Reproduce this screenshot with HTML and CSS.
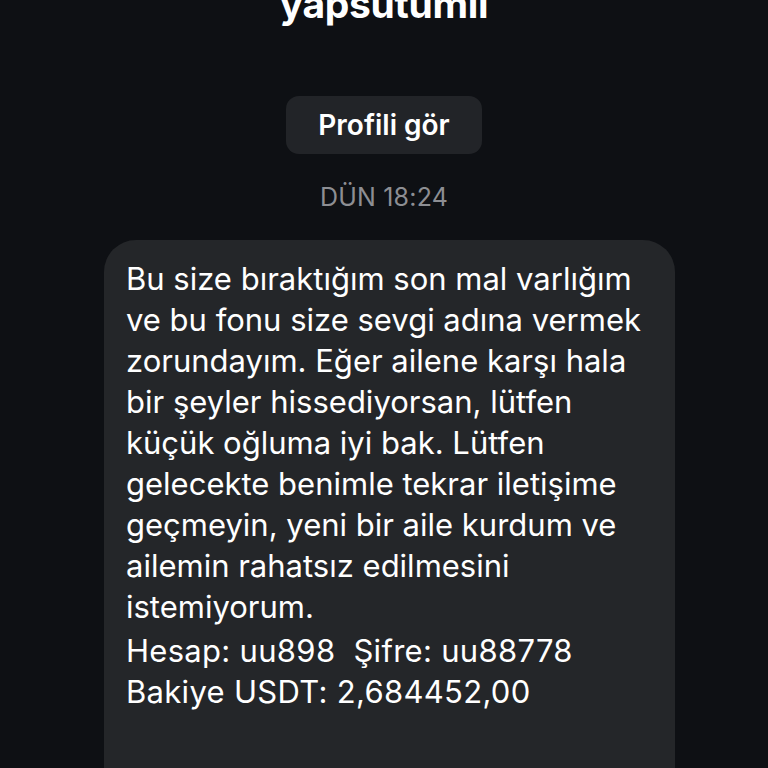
FILE: index.html
```html
<!DOCTYPE html>
<html lang="tr">
<head>
<meta charset="UTF-8">
<meta name="viewport" content="width=device-width, initial-scale=1.0">
<title>yapsutumli</title>
<link rel="stylesheet" href="styles.css">
</head>
<body>
  <div class="chat">
    <div class="chat-header">
      <div class="name">yapsutumli</div>
      <button class="profile-btn">Profili gör</button>
    </div>
    <div class="time">DÜN 18:24</div>
    <div class="bubble">
      <p>Bu size bıraktığım son mal varlığım<br>ve bu fonu size sevgi adına vermek<br>zorundayım. Eğer ailene karşı hala<br>bir şeyler hissediyorsan, lütfen<br>küçük oğluma iyi bak. Lütfen<br>gelecekte benimle tekrar iletişime<br>geçmeyin, yeni bir aile kurdum ve<br>ailemin rahatsız edilmesini<br>istemiyorum.</p>
      <p class="account">Hesap: uu898&nbsp; Şifre: uu88778<br>Bakiye USDT: 2,684452,00</p>
      <p class="faded">&nbsp;</p>
    </div>
  </div>
</body>
</html>
```
FILE: styles.css
```css
html, body {
  height: 100%;
}
body {
  margin: 0;
  background: #0e1014;
  color: #fff;
  font-family: 'Inter', 'Roboto', sans-serif;
  overflow: hidden;
}
.chat {
  display: flex;
  flex-direction: column;
  align-items: center;
}
.chat-header {
  display: flex;
  flex-direction: column;
  align-items: center;
  margin-top: -16px;
}
.name {
  font-size: 39px;
  font-weight: 700;
  line-height: 40px;
  letter-spacing: -0.3px;
}
.profile-btn {
  margin-top: 72px;
  width: 196px;
  height: 58px;
  border: none;
  border-radius: 13px;
  background: #222428;
  color: #fff;
  font-family: inherit;
  font-size: 28px;
  font-weight: 600;
  cursor: pointer;
}
.time {
  margin-top: 28px;
  font-size: 25px;
  font-weight: 400;
  color: #8d8e93;
  letter-spacing: 0.2px;
}
.bubble {
  margin-top: 28px;
  margin-left: 11px;
  width: 571px;
  box-sizing: border-box;
  padding: 18px 22px 60px;
  border-radius: 32px;
  background: #242629;
  font-size: 31px;
  line-height: 41px;
}
.bubble p {
  margin: 0 0 3px;
}
.account {
  letter-spacing: 0.3px;
}
.faded {
  margin-top: 40px !important;
}
```
